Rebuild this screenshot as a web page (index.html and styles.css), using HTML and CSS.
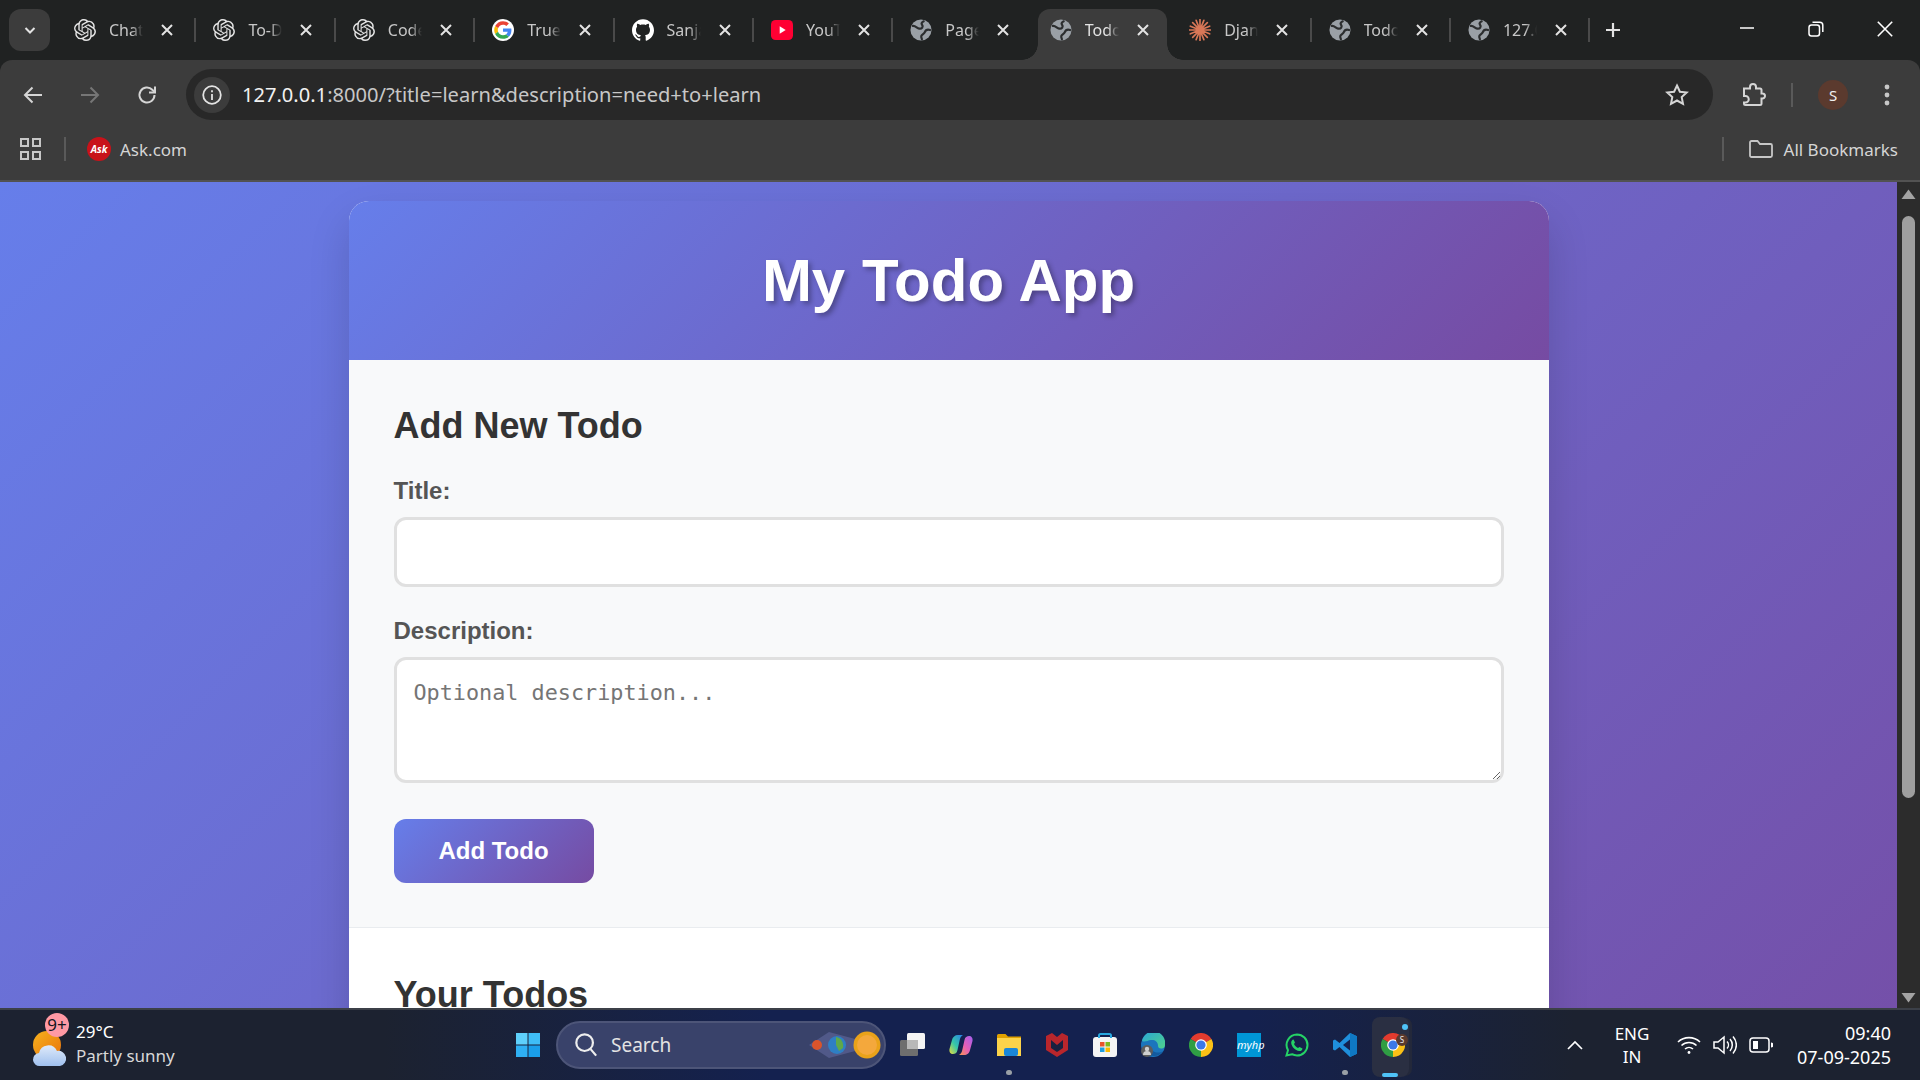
FILE: index.html
```html
<!DOCTYPE html>
<html lang="en">
<head>
<meta charset="UTF-8">
<meta name="viewport" content="width=device-width, initial-scale=1.0">
<title>Todo App</title>
<link rel="stylesheet" href="styles.css">
</head>
<body>

<svg class="defs" width="0" height="0">
    <defs>
        <linearGradient id="g-sun" x1="0" y1="0" x2="1" y2="1"><stop offset="0" stop-color="#f7b21d"/><stop offset="1" stop-color="#e8720c"/></linearGradient>
        <linearGradient id="g-cloud" x1="0" y1="0" x2="0" y2="1"><stop offset="0" stop-color="#dfeafa"/><stop offset="1" stop-color="#9fc0ee"/></linearGradient>
        <linearGradient id="g-cop-a" x1="1" y1="0" x2="0" y2="1"><stop offset="0" stop-color="#2a7fe8"/><stop offset=".55" stop-color="#35c6a8"/><stop offset="1" stop-color="#e9dc3c"/></linearGradient>
        <linearGradient id="g-cop-b" x1="1" y1="0" x2="0" y2="1"><stop offset="0" stop-color="#a45ff0"/><stop offset=".55" stop-color="#e85fb4"/><stop offset="1" stop-color="#f79a4a"/></linearGradient>
        <linearGradient id="g-edge" x1="0" y1="0" x2="1" y2="1"><stop offset="0" stop-color="#2aa6d8"/><stop offset="1" stop-color="#4fd18a"/></linearGradient>
    </defs>
    <symbol id="i-openai" viewBox="0 0 24 24">
        <path fill="#e3e3e3" d="M22.2819 9.8211a5.9847 5.9847 0 0 0-.5157-4.9108 6.0462 6.0462 0 0 0-6.5098-2.9A6.0651 6.0651 0 0 0 4.9807 4.1818a5.9847 5.9847 0 0 0-3.9977 2.9 6.0462 6.0462 0 0 0 .7427 7.0966 5.98 5.98 0 0 0 .511 4.9107 6.051 6.051 0 0 0 6.5146 2.9001A5.9847 5.9847 0 0 0 13.2599 24a6.0557 6.0557 0 0 0 5.7718-4.2058 5.9894 5.9894 0 0 0 3.9977-2.9001 6.0557 6.0557 0 0 0-.7475-7.0729zm-9.022 12.6081a4.4755 4.4755 0 0 1-2.8764-1.0408l.1419-.0804 4.7783-2.7582a.7948.7948 0 0 0 .3927-.6813v-6.7369l2.02 1.1686a.071.071 0 0 1 .038.052v5.5826a4.504 4.504 0 0 1-4.4945 4.4944zm-9.6607-4.1254a4.4708 4.4708 0 0 1-.5346-3.0137l.142.0852 4.783 2.7582a.7712.7712 0 0 0 .7806 0l5.8428-3.3685v2.3324a.0804.0804 0 0 1-.0332.0615L9.74 19.9502a4.4992 4.4992 0 0 1-6.1408-1.6464zM2.3408 7.8956a4.485 4.485 0 0 1 2.3655-1.9728V11.6a.7664.7664 0 0 0 .3879.6765l5.8144 3.3543-2.0201 1.1685a.0757.0757 0 0 1-.071 0l-4.8303-2.7865A4.504 4.504 0 0 1 2.3408 7.872zm16.5963 3.8558L13.1038 8.364 15.1192 7.2a.0757.0757 0 0 1 .071 0l4.8303 2.7913a4.4944 4.4944 0 0 1-.6765 8.1042v-5.6772a.79.79 0 0 0-.407-.667zm2.0107-3.0231l-.142-.0852-4.7735-2.7818a.7759.7759 0 0 0-.7854 0L9.409 9.2297V6.8974a.0662.0662 0 0 1 .0284-.0615l4.8303-2.7866a4.4992 4.4992 0 0 1 6.6802 4.66zM8.3065 12.863l-2.02-1.1638a.0804.0804 0 0 1-.038-.0567V6.0742a4.4992 4.4992 0 0 1 7.3757-3.4537l-.142.0805L8.704 5.459a.7948.7948 0 0 0-.3927.6813zm1.0976-2.3654l2.602-1.4998 2.6069 1.4998v2.9994l-2.5974 1.4997-2.6067-1.4997Z"/>
    </symbol>
    <symbol id="i-globe" viewBox="0 0 24 24">
        <circle cx="12" cy="12" r="11.500" fill="#9aa0a6"/>
        <g fill="none" stroke="#2c2e2f" stroke-width="2.400" stroke-linecap="round">
            <path d="M3 7.500c3-.5 4.500 2.500 7 3 3 .5 5-2 3-4.500-1-1.200 0-2.500 2-3.500"/>
            <path d="M22 12c-3-1-5 0-6 2.500-.5 1.500-2.500 2-3.500 3.500-.5 1 0 3 .5 4"/>
        </g>
    </symbol>
    <symbol id="i-x" viewBox="0 0 14 14">
        <path d="M2 2l10 10M12 2L2 12" stroke="#e3e3e3" stroke-width="2" fill="none"/>
    </symbol>
    <symbol id="i-chrome" viewBox="0 0 24 24">
        <path fill="#e33b2e" d="M12 12L1.600 6A12 12 0 0 1 22.400 6Z"/>
        <path fill="#fbc116" d="M12 12L22.400 6A12 12 0 0 1 12 24Z"/>
        <path fill="#2f9e44" d="M12 12L12 24A12 12 0 0 1 1.600 6Z"/>
        <circle cx="12" cy="12" r="5.800" fill="#fff"/>
        <circle cx="12" cy="12" r="4.600" fill="#3b78e7"/>
    </symbol>
</svg>

<div class="tabstrip">
    <button class="tab-menu">
        <svg width="14" height="14" viewBox="0 0 14 14"><path d="M2.500 5l4.500 4.500L11.500 5" stroke="#e3e3e3" stroke-width="2" fill="none"/></svg>
    </button>
    <div class="tab">
        <svg class="tab-icon"><use href="#i-openai"/></svg>
        <span class="tab-title">Chat</span>
        <svg class="tab-close"><use href="#i-x"/></svg>
    </div>
    <span class="tab-sep"></span>
    <div class="tab">
        <svg class="tab-icon"><use href="#i-openai"/></svg>
        <span class="tab-title">To-Do</span>
        <svg class="tab-close"><use href="#i-x"/></svg>
    </div>
    <span class="tab-sep"></span>
    <div class="tab">
        <svg class="tab-icon"><use href="#i-openai"/></svg>
        <span class="tab-title">Code</span>
        <svg class="tab-close"><use href="#i-x"/></svg>
    </div>
    <span class="tab-sep"></span>
    <div class="tab">
        <svg class="tab-icon" viewBox="-6 -6 60 60">
            <circle cx="24" cy="24" r="30" fill="#fff"/>
            <path fill="#EA4335" d="M24 9.500c3.540 0 6.710 1.220 9.210 3.600l6.850-6.850C35.900 2.380 30.470 0 24 0 14.620 0 6.510 5.380 2.560 13.220l7.980 6.190C12.430 13.720 17.740 9.500 24 9.500z"/>
            <path fill="#4285F4" d="M46.980 24.550c0-1.570-.15-3.090-.38-4.550H24v9.020h12.940c-.58 2.960-2.260 5.480-4.780 7.180l7.730 6c4.510-4.180 7.090-10.360 7.090-17.650z"/>
            <path fill="#FBBC05" d="M10.530 28.590c-.48-1.450-.76-2.990-.76-4.590s.27-3.140.76-4.590l-7.980-6.190C.92 16.460 0 20.120 0 24c0 3.880.92 7.540 2.560 10.780l7.970-6.190z"/>
            <path fill="#34A853" d="M24 48c6.480 0 11.930-2.130 15.890-5.810l-7.730-6c-2.150 1.450-4.920 2.300-8.160 2.300-6.260 0-11.570-4.220-13.470-9.910l-7.980 6.190C6.510 42.620 14.620 48 24 48z"/>
        </svg>
        <span class="tab-title">True</span>
        <svg class="tab-close"><use href="#i-x"/></svg>
    </div>
    <span class="tab-sep"></span>
    <div class="tab">
        <svg class="tab-icon" viewBox="0 0 24 24"><path fill="#fff" d="M12 .297c-6.630 0-12 5.373-12 12 0 5.303 3.438 9.800 8.205 11.385.600.113.820-.258.820-.577 0-.285-.010-1.040-.015-2.040-3.338.724-4.042-1.610-4.042-1.610C4.422 18.070 3.633 17.700 3.633 17.700c-1.087-.744.084-.729.084-.729 1.205.084 1.838 1.236 1.838 1.236 1.070 1.835 2.809 1.305 3.495.998.108-.776.417-1.305.760-1.605-2.665-.300-5.466-1.332-5.466-5.930 0-1.310.465-2.380 1.235-3.220-.135-.303-.540-1.523.105-3.176 0 0 1.005-.322 3.300 1.230.960-.267 1.980-.399 3-.405 1.020.006 2.040.138 3 .405 2.280-1.552 3.285-1.230 3.285-1.230.645 1.653.240 2.873.120 3.176.765.840 1.230 1.910 1.230 3.220 0 4.610-2.805 5.625-5.475 5.920.420.360.810 1.096.810 2.220 0 1.606-.015 2.896-.015 3.286 0 .315.210.690.825.570C20.565 22.092 24 17.592 24 12.297c0-6.627-5.373-12-12-12"/></svg>
        <span class="tab-title">Sanjay</span>
        <svg class="tab-close"><use href="#i-x"/></svg>
    </div>
    <span class="tab-sep"></span>
    <div class="tab">
        <svg class="tab-icon" viewBox="0 0 24 24"><rect y="1" width="24" height="22" rx="5" fill="#ff0033"/><path d="M9.500 8l6.500 4-6.500 4z" fill="#fff"/></svg>
        <span class="tab-title">YouTube</span>
        <svg class="tab-close"><use href="#i-x"/></svg>
    </div>
    <span class="tab-sep"></span>
    <div class="tab">
        <svg class="tab-icon"><use href="#i-globe"/></svg>
        <span class="tab-title">Page</span>
        <svg class="tab-close"><use href="#i-x"/></svg>
    </div>
    <span class="tab-sep hidden"></span>
    <div class="tab active">
        <svg class="tab-icon"><use href="#i-globe"/></svg>
        <span class="tab-title">Todo</span>
        <svg class="tab-close"><use href="#i-x"/></svg>
    </div>
    <span class="tab-sep hidden"></span>
    <div class="tab">
        <svg class="tab-icon" viewBox="0 0 24 24">
            <g stroke="#d97757" stroke-width="1.800" stroke-linecap="round">
                <path d="M12 .5v23M.5 12h23M4 4l16 16M20 4L4 20M7.800 1.500l8.400 21M16.200 1.500L7.800 22.500M1.500 7.800l21 8.400M22.500 7.800L1.500 16.200"/>
            </g>
        </svg>
        <span class="tab-title">Django</span>
        <svg class="tab-close"><use href="#i-x"/></svg>
    </div>
    <span class="tab-sep"></span>
    <div class="tab">
        <svg class="tab-icon"><use href="#i-globe"/></svg>
        <span class="tab-title">Todo</span>
        <svg class="tab-close"><use href="#i-x"/></svg>
    </div>
    <span class="tab-sep"></span>
    <div class="tab">
        <svg class="tab-icon"><use href="#i-globe"/></svg>
        <span class="tab-title">127.0</span>
        <svg class="tab-close"><use href="#i-x"/></svg>
    </div>
    <span class="tab-sep"></span>
    <svg class="new-tab" width="18" height="18" viewBox="0 0 18 18"><path d="M9 2v14M2 9h14" stroke="#e3e3e3" stroke-width="2.200"/></svg>
    <div class="window-controls">
        <svg width="16" height="16" viewBox="0 0 16 16"><path d="M1 7h14" stroke="#fff" stroke-width="1.500"/></svg>
        <svg width="16" height="16" viewBox="0 0 16 16" fill="none" stroke="#fff" stroke-width="1.500"><rect x="1" y="4" width="10.500" height="11" rx="2.500"/><path d="M4.500 1.200h7.300a3 3 0 0 1 3 3V11"/></svg>
        <svg width="16" height="16" viewBox="0 0 16 16"><path d="M.8.800l14.400 14.400M15.200.800L.8 15.200" stroke="#fff" stroke-width="1.600"/></svg>
    </div>
</div>

<div class="toolbar">
    <svg class="tool-icon" viewBox="0 0 24 24" fill="none" stroke="#d5d5d5" stroke-width="2"><path d="M21 12H4M11.500 4.500L4 12l7.500 7.500"/></svg>
    <svg class="tool-icon" viewBox="0 0 24 24" fill="none" stroke="#767676" stroke-width="2"><path d="M3 12h17M12.500 4.500L20 12l-7.500 7.500"/></svg>
    <svg class="tool-icon" viewBox="0 0 24 24" fill="none" stroke="#d5d5d5" stroke-width="2"><path d="M19.500 12a7.500 7.500 0 1 1-2.200-5.300L20 9.400"/><path d="M20 3.500v6h-6" /></svg>
    <div class="omnibox">
        <span class="site-info">
            <svg width="22" height="22" viewBox="0 0 22 22" fill="none" stroke="#e3e3e3" stroke-width="1.800"><circle cx="11" cy="11" r="8.800"/><path d="M11 10v6M11 6.200v2"/></svg>
        </span>
        <span class="url"><span class="url-host">127.0.0.1</span>:8000/?title=learn&amp;description=need+to+learn</span>
        <svg class="tool-icon star" viewBox="0 0 24 24" fill="none" stroke="#d5d5d5" stroke-width="2"><path d="M12 2.500l2.900 6.200 6.800.8-5 4.600 1.300 6.700-6-3.300-6 3.300 1.300-6.700-5-4.600 6.800-.8z"/></svg>
    </div>
    <svg class="tool-icon puzzle" viewBox="0 0 24 24" fill="none" stroke="#d5d5d5" stroke-width="2"><path d="M2 5.500h6V4a3 3 0 0 1 6 0v1.500h4a1.500 1.500 0 0 1 1.500 1.500v3.500h1a2.500 2.500 0 0 1 0 5h-1v5a1.500 1.500 0 0 1-1.500 1.500H3.500A1.500 1.500 0 0 1 2 20.500v-1h1.500a3 3 0 0 0 0-6.500H2z"/></svg>
    <span class="tool-divider"></span>
    <span class="avatar">S</span>
    <svg class="kebab" width="6" height="22" viewBox="0 0 6 22"><circle cx="3" cy="3" r="2.400" fill="#c7c7c7"/><circle cx="3" cy="11" r="2.400" fill="#c7c7c7"/><circle cx="3" cy="19" r="2.400" fill="#c7c7c7"/></svg>
</div>

<div class="bookmarks">
    <svg class="apps" width="21" height="22" viewBox="0 0 21 22" fill="none" stroke="#c7c7c7" stroke-width="2"><rect x="1" y="1" width="7" height="7"/><rect x="13" y="1" width="7" height="7"/><rect x="1" y="14" width="7" height="7"/><rect x="13" y="14" width="7" height="7"/></svg>
    <span class="bar-divider"></span>
    <span class="ask-icon">Ask</span>
    <span class="bookmark-label">Ask.com</span>
    <div class="all-bookmarks">
        <span class="bar-divider"></span>
        <svg class="folder" width="24" height="18" viewBox="0 0 24 18" fill="none" stroke="#c7c7c7" stroke-width="1.800"><path d="M1 2.500A1.500 1.500 0 0 1 2.500 1h6l2.500 3h10.500A1.500 1.500 0 0 1 23 5.500v10a1.500 1.500 0 0 1-1.500 1.500h-19A1.500 1.500 0 0 1 1 15.500z"/></svg>
        <span class="bookmark-label">All Bookmarks</span>
    </div>
</div>

<div class="viewport">
    <div class="page">
        <div class="container">
            <header class="app-header">
                <h1>My Todo App</h1>
            </header>
            <section class="add-section">
                <h2>Add New Todo</h2>
                <form>
                    <label for="title">Title:</label>
                    <input type="text" id="title">
                    <label for="description" class="label-desc">Description:</label>
                    <textarea id="description" placeholder="Optional description..."></textarea>
                    <button type="button" class="btn-add">Add Todo</button>
                </form>
            </section>
            <section class="todo-section">
                <h2>Your Todos</h2>
            </section>
        </div>
    </div>
    <div class="scrollbar">
        <svg class="arrow-up" width="15" height="10" viewBox="0 0 15 10"><path d="M7.500 .5L14.500 10H.5z" fill="#a3a3a3"/></svg>
        <div class="thumb"></div>
        <svg class="arrow-down" width="15" height="10" viewBox="0 0 15 10"><path d="M7.500 9.500L14.500 0H.5z" fill="#a3a3a3"/></svg>
    </div>
</div>

<div class="taskbar">
    <div class="task-left">
        <div class="weather-icon">
            <svg width="36" height="38" viewBox="0 0 36 38">
                <circle cx="15" cy="15" r="14" fill="url(#g-sun)"/>
                <path d="M8 36a6.500 6.500 0 0 1-1-13A9.500 9.500 0 0 1 25 21a7.500 7.500 0 0 1 3 15z" fill="url(#g-cloud)"/>
            </svg>
            <span class="weather-badge">9+</span>
        </div>
        <div class="weather-text">
            <span class="temp">29°C</span>
            <span class="cond">Partly sunny</span>
        </div>
    </div>
    <div class="task-center">
        <svg class="win-logo" width="24" height="24" viewBox="0 0 24 24">
            <rect width="11.500" height="11.500" fill="#5fd0fb"/><rect x="12.500" width="11.500" height="11.500" fill="#3fbdf6"/>
            <rect y="12.500" width="11.500" height="11.500" fill="#2fb0f3"/><rect x="12.500" y="12.500" width="11.500" height="11.500" fill="#1a9ee9"/>
        </svg>
        <div class="search-pill">
            <svg width="24" height="26" viewBox="0 0 26 28" fill="none" stroke="#eee" stroke-width="2.400"><circle cx="11.500" cy="11.500" r="9"/><path d="M18 18.500l6 7"/></svg>
            <span class="search-text">Search</span>
            <svg class="bing-art" width="76" height="36" viewBox="0 0 76 36">
                <path d="M4 18L24 5l30 8v10L24 31z" fill="#6a6fa8" opacity=".5"/>
                <circle cx="12" cy="18" r="5" fill="#d9542b"/>
                <circle cx="32" cy="18" r="9" fill="#2f7fc4"/>
                <path d="M31 10c5 1 8 5 7 11l-4 3-3-6z" fill="#5fa84a"/>
                <circle cx="62" cy="18" r="13.500" fill="#e9a21a"/>
                <circle cx="62" cy="18" r="10" fill="#f4a83c"/>
            </svg>
        </div>
        <div class="task-icons">
            <div class="task-slot">
                <svg width="26" height="24" viewBox="0 0 26 24"><rect x="0" y="7" width="18" height="16" rx="1.500" fill="#6e6e6e"/><rect x="7" y="0" width="18" height="16" rx="1.500" fill="#f4f4f4"/><rect x="7" y="7" width="11" height="9" fill="#b8b8b8"/></svg>
            </div>
            <div class="task-slot">
                <svg width="24" height="24" viewBox="0 0 24 24">
                    <path d="M9 2h5c-2 1-3 3-3.500 6L8.500 17c-.5 3-2.500 4-4.500 4-2.500 0-4-2-3.500-5L3 7c.5-3 3-5 6-5z" fill="url(#g-cop-a)"/>
                    <path d="M15 22h-5c2-1 3-3 3.500-6L15.500 7c.5-3 2.500-4 4.500-4 2.500 0 4 2 3.500 5L21 17c-.5 3-3 5-6 5z" fill="url(#g-cop-b)"/>
                </svg>
            </div>
            <div class="task-slot">
                <svg width="24" height="22" viewBox="0 0 24 22"><path d="M0 1.500A1.500 1.500 0 0 1 1.500 0h7l2.500 2.500h13V6H0z" fill="#e0a100"/><rect y="4" width="24" height="18" fill="#fcd34a"/><rect x="7" y="14" width="14" height="8" rx="2" fill="#1a86d8"/></svg>
                <span class="run-dot"></span>
            </div>
            <div class="task-slot">
                <svg width="22" height="24" viewBox="0 0 22 24"><path d="M0 3l6-3 5 4 5-4 6 3v14l-11 7L0 17z" fill="#b9262c"/><path d="M5 7l6 5 6-5v8l-6 4-6-4z" fill="#1a2140"/></svg>
            </div>
            <div class="task-slot">
                <svg width="24" height="24" viewBox="0 0 24 24">
                    <rect x="0" y="4" width="24" height="20" rx="3" fill="#f4f4f4"/>
                    <path d="M6 5V2.500A1.500 1.500 0 0 1 7.500 1h9A1.500 1.500 0 0 1 18 2.500V5" stroke="#29a8e0" stroke-width="2" fill="none"/>
                    <rect x="7" y="9" width="4.500" height="4.500" fill="#e8532b"/><rect x="12.500" y="9" width="4.500" height="4.500" fill="#7db81f"/>
                    <rect x="7" y="14.500" width="4.500" height="4.500" fill="#1f9ee0"/><rect x="12.500" y="14.500" width="4.500" height="4.500" fill="#fbb900"/>
                </svg>
            </div>
            <div class="task-slot">
                <svg width="24" height="24" viewBox="0 0 24 24">
                    <circle cx="12" cy="12" r="12" fill="#1b75bd"/>
                    <path d="M1 8a11.500 11.500 0 0 1 23 4c0 3-2.500 3.500-4 3.500-2 0-3-1-3-3 0-4-3.500-6-7-5.500-3.500.4-6 2.500-9 1z" fill="url(#g-edge)"/>
                    <path d="M8 22c5 2 11 1 14-4-3 2-7 2-10 0z" fill="#135a9e"/>
                    <circle cx="6" cy="18" r="6" fill="#5d5d5d"/>
                    <circle cx="6" cy="16" r="2.200" fill="#cfcfcf"/><path d="M2 22a4 4 0 0 1 8 0z" fill="#cfcfcf"/>
                </svg>
            </div>
            <div class="task-slot">
                <svg width="24" height="24"><use href="#i-chrome"/></svg>
            </div>
            <div class="task-slot">
                <span class="myhp">myhp</span>
            </div>
            <div class="task-slot">
                <svg width="24" height="24" viewBox="0 0 24 24" fill="none"><path d="M12 1.500a10.500 10.500 0 0 1 0 21c-1.800 0-3.500-.4-5-1.300L1.500 22.500 3 17.200A10.500 10.500 0 0 1 12 1.500z" stroke="#25d366" stroke-width="2"/><path d="M8.500 6.500l1.500 3-1 1.500c.8 1.800 2.200 3.200 4 4l1.500-1 3 1.500c-.3 2-1.800 2.700-3.300 2.500-4-.6-7.500-4-8-8-.2-1.500 1-3.500 2.300-3.500z" fill="#25d366"/></svg>
            </div>
            <div class="task-slot">
                <svg width="24" height="24" viewBox="0 0 24 24"><path d="M17 0l7 3.200v17.600L17 24 6.500 14 2 17.500 0 16.500v-9l2-1L6.500 10z" fill="#1f8fdc"/><path d="M17 6.500L10 12l7 5.500z" fill="#14214f"/><path d="M17 0l7 3.200v17.600L17 24z" fill="#0f78c4"/></svg>
                <span class="run-dot"></span>
            </div>
            <div class="task-slot active-app">
                <span class="active-bg"></span>
                <svg class="chrome-app" width="24" height="24"><use href="#i-chrome"/></svg>
                <span class="profile-mini">S</span>
                <span class="notify-dot"></span>
                <span class="active-bar"></span>
            </div>
        </div>
    </div>
    <div class="task-tray">
        <svg width="16" height="10" viewBox="0 0 16 10" fill="none" stroke="#fff" stroke-width="1.700"><path d="M1 9l7-7 7 7"/></svg>
        <div class="lang"><span>ENG</span><span>IN</span></div>
        <svg class="tray-wifi" width="24" height="20" viewBox="0 0 24 20" fill="none" stroke="#fff" stroke-width="1.600"><path d="M1 7a16 16 0 0 1 22 0M4.500 10.500a11 11 0 0 1 15 0M8 14a6 6 0 0 1 8 0"/><circle cx="12" cy="17.500" r="1.400" fill="#fff" stroke="none"/></svg>
        <svg class="tray-icon" width="24" height="20" viewBox="0 0 24 20" fill="none" stroke="#fff" stroke-width="1.500"><path d="M1 7h4l6-5v16l-6-5H1z"/><path d="M14 6.500a5 5 0 0 1 0 7M17 4a9 9 0 0 1 0 12M20 1.500a12.500 12.500 0 0 1 0 17"/></svg>
        <svg class="tray-icon" width="24" height="16" viewBox="0 0 24 16" fill="none" stroke="#fff" stroke-width="1.500"><rect x="1" y="1" width="19" height="14" rx="3"/><rect x="4" y="4" width="5" height="8" fill="#fff" stroke="none"/><path d="M22 5.500a1.500 1.500 0 0 1 0 5z" fill="#fff" stroke="none"/></svg>
        <div class="clock"><span>09:40</span><span>07-09-2025</span></div>
    </div>
</div>

</body>
</html>
```

FILE: styles.css
```css
* {
    box-sizing: border-box;
}
html, body {
    margin: 0;
    padding: 0;
    height: 100%;
    overflow: hidden;
}
body {
    font-family: "Noto Sans", "Open Sans", sans-serif;
    background-color: #202222;
}
.defs {
    display: block;
    height: 0;
}

/* tab strip */
.tabstrip {
    display: flex;
    align-items: flex-start;
    height: 60px;
    padding-top: 9px;
    padding-left: 9px;
    background-color: #202222;
    color: #c7c7c7;
}
.tab-menu {
    display: flex;
    align-items: center;
    justify-content: center;
    width: 41px;
    height: 42px;
    margin-right: 7px;
    padding: 0;
    border: none;
    border-radius: 12px;
    background-color: #3c3c3c;
}
.tab {
    position: relative;
    display: flex;
    align-items: center;
    width: 137.4px;
    height: 42px;
    padding-left: 17px;
}
.tab > * {
    position: relative;
    z-index: 1;
}
.tab-icon {
    width: 22px;
    height: 22px;
    flex: none;
}
.tab-title {
    width: 34px;
    margin-left: 13px;
    overflow: hidden;
    white-space: nowrap;
    font-size: 16px;
    -webkit-mask-image: linear-gradient(to right, #000 65%, transparent);
    mask-image: linear-gradient(to right, #000 65%, transparent);
}
.tab-close {
    width: 14px;
    height: 14px;
    margin-left: 17px;
    flex: none;
}
.tab-sep {
    width: 2px;
    height: 24px;
    margin-top: 9px;
    flex: none;
    background-color: #4a4a4a;
}
.tab-sep.hidden {
    visibility: hidden;
}
.tab.active {
    height: 51px;
    padding-bottom: 9px;
    color: #e3e3e3;
}
.tab.active::before {
    content: "";
    position: absolute;
    top: 0;
    bottom: 0;
    left: 5px;
    right: 3px;
    border-radius: 12px 12px 0 0;
    background-color: #3c3c3c;
}
.tab.active::after {
    content: "";
    position: absolute;
    bottom: 0;
    left: -11px;
    right: -13px;
    height: 16px;
    background:
        radial-gradient(circle at 0 0, transparent 15.5px, #3c3c3c 16px) left bottom / 16px 16px no-repeat,
        radial-gradient(circle at 100% 0, transparent 15.5px, #3c3c3c 16px) right bottom / 16px 16px no-repeat;
}
.new-tab {
    margin-top: 12px;
    margin-left: 14px;
}
.window-controls {
    display: flex;
    gap: 53px;
    margin-left: auto;
    margin-top: 12px;
    padding-right: 27px;
}

/* toolbar */
.toolbar {
    display: flex;
    align-items: center;
    height: 60px;
    padding: 9px 30px 0 21px;
    border-radius: 12px 12px 0 0;
    background-color: #3c3c3c;
}
.tool-icon {
    width: 24px;
    height: 24px;
    flex: none;
    margin-right: 33px;
}
.omnibox {
    display: flex;
    align-items: center;
    flex: 1;
    height: 51px;
    margin-left: -6px;
    padding-left: 8px;
    border-radius: 26px;
    background-color: #282828;
}
.site-info {
    display: flex;
    align-items: center;
    justify-content: center;
    width: 36px;
    height: 36px;
    border-radius: 50%;
    background-color: #3c3c3c;
}
.url {
    margin-left: 12px;
    font-size: 20.1px;
    color: #c7c7c7;
    white-space: nowrap;
}
.url-host {
    color: #f1f1f1;
}
.star {
    margin-left: auto;
    margin-right: 24px;
}
.puzzle {
    margin-left: 29px;
    margin-right: 0;
}
.tool-divider {
    width: 2px;
    height: 24px;
    margin-left: 25px;
    background-color: #5a5a5a;
}
.avatar {
    display: flex;
    align-items: center;
    justify-content: center;
    width: 30px;
    height: 30px;
    margin-left: 25px;
    border-radius: 50%;
    background-color: #5b3a2e;
    color: #f1f1f1;
    font-size: 15px;
}
.kebab {
    margin-left: 36px;
}

/* bookmarks bar */
.bookmarks {
    display: flex;
    align-items: center;
    height: 62px;
    padding: 0 22px 2px 20px;
    border-bottom: 2px solid #525252;
    background-color: #3c3c3c;
}
.bar-divider {
    width: 2px;
    height: 24px;
    margin-left: 23px;
    background-color: #5a5a5a;
}
.ask-icon {
    display: flex;
    align-items: center;
    justify-content: center;
    width: 24px;
    height: 24px;
    margin-left: 21px;
    border-radius: 50%;
    background-color: #c8121a;
    color: #fff;
    font-size: 10px;
    font-weight: bold;
    font-style: italic;
}
.bookmark-label {
    margin-left: 9px;
    font-size: 17px;
    color: #d5d5d5;
}
.all-bookmarks {
    display: flex;
    align-items: center;
    margin-left: auto;
}
.folder {
    margin-left: 25px;
}
.all-bookmarks .bookmark-label {
    margin-left: 11px;
}

/* page */
.viewport {
    display: flex;
    height: 826px;
}
.page {
    flex: 1;
    overflow: hidden;
    padding-top: 19px;
    background: linear-gradient(135deg, #667eea 0%, #764ba2 100%) top left / 100% 1116px no-repeat;
}
.container {
    width: 1200px;
    margin: 0 auto;
    border-radius: 20px 20px 0 0;
    background-color: white;
    box-shadow: 0 20px 40px rgba(0, 0, 0, 0.15);
}
.app-header {
    display: flex;
    align-items: center;
    justify-content: center;
    height: 159px;
    border-radius: 20px 20px 0 0;
    background: linear-gradient(135deg, #667eea 0%, #764ba2 100%);
}
.app-header h1 {
    margin: 0;
    font-family: "Liberation Sans", Arial, sans-serif;
    font-size: 60px;
    font-weight: bold;
    color: white;
    text-shadow: 3px 3px 5px rgba(0, 0, 0, 0.3);
}
.add-section {
    height: 568px;
    padding: 45px 45px 0;
    border-bottom: 1px solid #e9ecef;
    background-color: #f8f9fa;
    font-family: "Liberation Sans", Arial, sans-serif;
}
h2 {
    margin: 0;
    font-family: "Liberation Sans", Arial, sans-serif;
    font-size: 36px;
    font-weight: bold;
    color: #333;
}
label {
    display: block;
    margin-top: 30px;
    margin-bottom: 12px;
    font-size: 24px;
    font-weight: bold;
    color: #555;
}
.label-desc {
    margin-top: 30px;
}
input[type="text"], textarea {
    display: block;
    width: 100%;
    border: 3px solid #e0e0e0;
    border-radius: 12px;
    background-color: white;
}
input[type="text"] {
    height: 70px;
}
textarea {
    height: 126px;
    padding: 20px 17px;
    font-family: "DejaVu Sans Mono", monospace;
    font-size: 21.8px;
}
textarea::placeholder {
    color: #757575;
}
.btn-add {
    display: block;
    width: 200px;
    height: 64px;
    margin-top: 36px;
    border: none;
    border-radius: 12px;
    background: linear-gradient(135deg, #667eea 0%, #764ba2 100%);
    color: white;
    font-family: "Liberation Sans", Arial, sans-serif;
    font-size: 24px;
    font-weight: bold;
}
.todo-section {
    height: 200px;
    padding: 46px 45px 0;
    background-color: white;
}

/* scrollbar */
.scrollbar {
    display: flex;
    flex-direction: column;
    align-items: center;
    width: 23px;
    background-color: #2c2c2c;
}
.arrow-up {
    margin-top: 7px;
}
.thumb {
    width: 13px;
    height: 582px;
    margin-top: 17px;
    border-radius: 7px;
    background-color: #9f9f9f;
}
.arrow-down {
    margin-top: 195px;
}

/* taskbar */
.taskbar {
    display: flex;
    align-items: center;
    height: 72px;
    border-top: 2px solid #3c4048;
    background: linear-gradient(to right, #1c2230 0%, #1c2230 20%, #14214f 40%, #14214f 65%, #1c2230 82%, #1c2230 100%);
    color: white;
}
.task-left {
    display: flex;
    align-items: center;
    width: 515px;
    padding-left: 32px;
}
.weather-icon {
    position: relative;
    width: 36px;
    height: 38px;
    margin-top: 8px;
}
.weather-badge {
    position: absolute;
    top: -17px;
    left: 13px;
    width: 24px;
    height: 24px;
    border-radius: 50%;
    background-color: #ff99a4;
    color: #14161f;
    font-size: 17px;
    line-height: 24px;
    text-align: center;
}
.weather-text {
    display: flex;
    flex-direction: column;
    margin-left: 8px;
    margin-top: -2px;
    font-size: 17px;
    line-height: 24px;
}
.cond {
    color: #d8d8d8;
}
.task-center {
    display: flex;
    align-items: center;
    width: 902px;
}
.win-logo {
    margin-left: 1px;
}
.search-pill {
    display: flex;
    align-items: center;
    width: 330px;
    height: 48px;
    margin-left: 16px;
    padding-left: 16px;
    border: 2px solid #4d5578;
    border-radius: 24px;
    background-color: #39426a;
}
.search-text {
    margin-left: 13px;
    font-size: 19px;
    color: #e3e3e3;
}
.bing-art {
    margin-left: auto;
    margin-right: 3px;
}
.task-icons {
    display: flex;
    margin-left: 3px;
}
.task-slot {
    position: relative;
    display: flex;
    align-items: center;
    justify-content: center;
    width: 48px;
    height: 60px;
}
.run-dot {
    position: absolute;
    left: 21px;
    bottom: 0;
    width: 6px;
    height: 5px;
    border-radius: 3px;
    background-color: #9aa0a6;
}
.myhp {
    width: 24px;
    height: 24px;
    background-color: #0096d6;
    color: white;
    font-size: 11px;
    font-style: italic;
    line-height: 24px;
    text-align: center;
}
.active-bg {
    position: absolute;
    top: 2px;
    left: 3px;
    width: 37px;
    height: 60px;
    border-radius: 8px;
    background-color: #2a2f42;
    box-shadow: 4px 0 0 -1px #23283a;
}
.chrome-app {
    position: relative;
}
.profile-mini {
    position: absolute;
    top: 19px;
    left: 27px;
    width: 12px;
    height: 12px;
    border-radius: 50%;
    background-color: #5b3a2e;
    color: #eee;
    font-size: 8px;
    line-height: 12px;
    text-align: center;
}
.notify-dot {
    position: absolute;
    top: 9px;
    left: 33px;
    width: 6px;
    height: 6px;
    border-radius: 50%;
    background-color: #4fc3f7;
}
.active-bar {
    position: absolute;
    left: 13px;
    bottom: -2px;
    width: 16px;
    height: 4px;
    border-radius: 2px;
    background-color: #4fc3f7;
}
.task-tray {
    display: flex;
    align-items: center;
    flex: 1;
    padding-left: 150px;
    padding-right: 29px;
}
.lang {
    display: flex;
    flex-direction: column;
    align-items: center;
    width: 50px;
    margin-left: 24px;
    font-size: 17px;
    line-height: 23px;
}
.tray-wifi {
    margin-left: 20px;
}
.tray-icon {
    margin-left: 12px;
}
.clock {
    display: flex;
    flex-direction: column;
    align-items: flex-end;
    margin-left: auto;
    font-size: 18px;
    line-height: 24px;
}
```
